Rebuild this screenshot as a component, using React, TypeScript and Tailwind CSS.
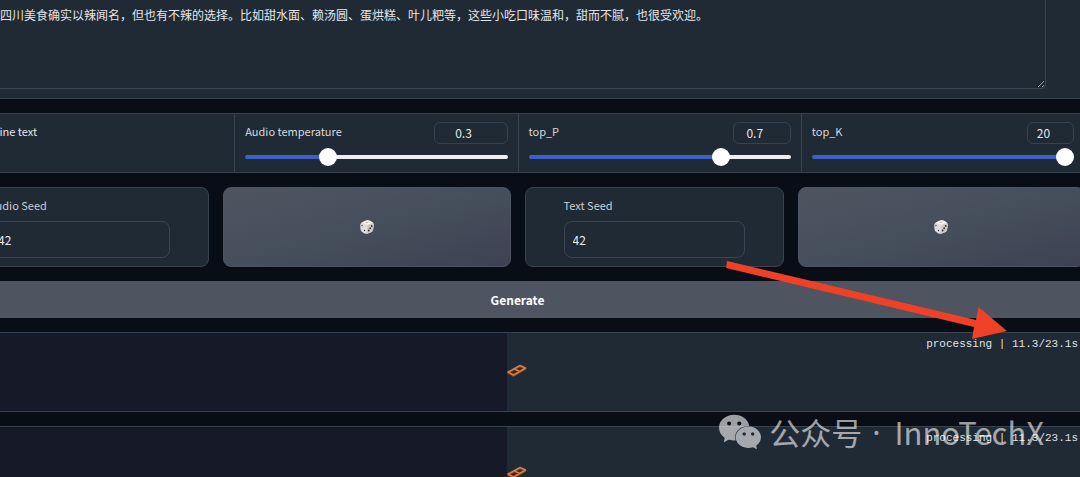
import { useState } from "react";
import { SiWechat } from "react-icons/si";

const PANEL = "border border-[#39424f] bg-[#202a35]";

function SliderCell({
  id,
  label,
  min,
  max,
  step,
  initial,
  boxClass,
}: {
  id: string;
  label: string;
  min: number;
  max: number;
  step: number;
  initial: number;
  boxClass: string;
}) {
  const [value, setValue] = useState(initial);
  const fill = ((value - min) / (max - min)) * 100;
  return (
    <div className="flex min-w-0 flex-col border-l border-[#39424f] px-2.5 pt-2">
      <div className="flex items-start justify-between">
        <label htmlFor={id} className="text-[11px] leading-[18px] text-[#d5d9df]">
          {label}
        </label>
        <input
          type="number"
          aria-label={`${label} value`}
          min={min}
          max={max}
          step={step}
          value={value}
          onChange={(e) => setValue(Number(e.target.value))}
          className={`h-[22px] rounded-md border border-[#374151] bg-transparent pr-3.5 pb-px text-center text-[#e5e7eb] [appearance:textfield] [&::-webkit-inner-spin-button]:appearance-none ${boxClass}`}
        />
      </div>
      <input
        id={id}
        type="range"
        min={min}
        max={max}
        step={step}
        value={value}
        onChange={(e) => setValue(Number(e.target.value))}
        style={{
          backgroundImage: `linear-gradient(to right, #3b5fcb ${fill}%, #eceef2 ${fill}%)`,
        }}
        className="mt-[11px] block h-1 w-full appearance-none rounded-full [&::-webkit-slider-thumb]:size-[18px] [&::-webkit-slider-thumb]:appearance-none [&::-webkit-slider-thumb]:rounded-full [&::-webkit-slider-thumb]:bg-white"
      />
    </div>
  );
}

function SeedCard({ id, label }: { id: string; label: string }) {
  return (
    <div className={`min-w-0 rounded-lg px-[38px] pt-2 ${PANEL}`}>
      <label htmlFor={id} className="block text-[11px] leading-[18px] text-[#c9ced6]">
        {label}
      </label>
      <input
        id={id}
        type="text"
        defaultValue="42"
        className="mt-[7px] block h-[37px] w-full rounded-lg border border-[#3b4552] bg-[#202a35] px-2 pb-px text-[#e8eaee]"
      />
    </div>
  );
}

function Dice() {
  return (
    <svg viewBox="0 0 28 28" className="size-3.5" aria-hidden="true">
      <path d="M9 2.5 Q14 -.5 20 1.5 L25 4.5 Q28 7 27.5 11 L26 20 Q25 23 21 25 L14 27.5 Q11 28 8 26.5 L3 23 Q1 21 .8 17 L.5 10 Q.5 7 3 5.5Z" fill="#dcdcda" />
      <path d="M3 5.5 L9 2.5 Q14 -.5 20 1.5 L26 5.5 L15 10Z" fill="#f0f0ef" />
      <path d="M15 10 L26.5 6 Q28 8 27.5 11 L26 20 Q25 23 21 25 L14 27.5Z" fill="#c9c9c7" />
      <ellipse cx="13.5" cy="4.5" rx="2.4" ry="1.1" fill="#b9a4a6" />
      <g fill="#2c2c2c">
        <ellipse cx="4" cy="11" rx="1.2" ry="1.6" />
        <ellipse cx="9" cy="21" rx="1.2" ry="1.6" />
        <ellipse cx="23.5" cy="12" rx="1.7" ry="1.9" />
        <ellipse cx="20.3" cy="16.5" rx="1.7" ry="1.9" />
        <ellipse cx="17.3" cy="21" rx="1.7" ry="1.9" />
      </g>
    </svg>
  );
}

function DiceButton({ label }: { label: string }) {
  return (
    <button
      type="button"
      aria-label={label}
      className="flex min-w-0 items-center justify-center rounded-lg border border-[#4b5563] bg-linear-to-br from-[#4e5561] via-[#454f5b] to-[#3e4153]"
    >
      <Dice />
    </button>
  );
}

function Loader() {
  return (
    <svg viewBox="0 0 40 26" className="h-[13px] w-5" aria-hidden="true">
      <path d="M2 18 L26 5 L37 10 L13 24Z" fill="#47240f" stroke="#8a451d" strokeWidth="3" strokeLinejoin="round" />
      <path d="M2 16 L26 3 L37 8 L13 22Z M14 9.5 L25 15" fill="none" stroke="#c9824f" strokeWidth="3" strokeLinejoin="round" />
    </svg>
  );
}

function StatusPanel({ heightClass }: { heightClass: string }) {
  const elapsed = 11.34;
  const total = 23.1;
  return (
    <section className={`relative flex shrink-0 items-center justify-center pr-0.5 pb-1 ${heightClass} ${PANEL}`}>
      <div
        className="absolute inset-y-0 left-0 bg-[#161a28]"
        style={{ width: `${(elapsed / total) * 100}%` }}
      />
      <p className="absolute top-1 right-1.5 font-['Liberation_Mono',monospace] text-[11px] leading-[14px] text-[#dfe2e6]">
        processing | {elapsed.toFixed(1)}/{total}s
      </p>
      <div className="relative">
        <Loader />
      </div>
    </section>
  );
}

export default function App() {
  return (
    <div className="relative h-screen overflow-hidden bg-[#090d16] font-['Noto_Sans_CJK_SC',sans-serif] text-xs">
      <main className="-mt-[33px] -mr-[5px] -ml-[50px] flex flex-col gap-3.5">
        <section className={`px-[38px] pt-7 pb-[9px] ${PANEL}`}>
          <textarea
            aria-label="Input text"
            spellCheck={false}
            defaultValue="四川美食确实以辣闻名，但也有不辣的选择。比如甜水面、赖汤圆、蛋烘糕、叶儿粑等，这些小吃口味温和，甜而不腻，也很受欢迎。"
            className="block h-[93px] w-full resize rounded-sm border border-[#3b4552] bg-transparent px-2.5 py-[9px] leading-[18px] text-[#e3e6ea] [color-scheme:dark]"
          />
        </section>

        <section className={`grid h-[60px] shrink-0 grid-cols-4 ${PANEL}`}>
          <label className="flex items-start gap-2 px-2.5 pt-2 text-[11px] leading-[18px] text-[#e3e6ea]">
            <input type="checkbox" defaultChecked className="mt-0.5 size-3.5" />
            Refine text
          </label>
          <SliderCell id="temperature" label="Audio temperature" min={0} max={1} step={0.1} initial={0.3} boxClass="w-[74px]" />
          <SliderCell id="top-p" label="top_P" min={0.1} max={0.9} step={0.05} initial={0.7} boxClass="w-[58px]" />
          <SliderCell id="top-k" label="top_K" min={1} max={20} step={1} initial={20} boxClass="w-[47px]" />
        </section>

        <section className="grid h-20 shrink-0 grid-cols-[259fr_287fr_259fr_287fr] gap-3.5">
          <SeedCard id="audio-seed" label="Audio Seed" />
          <DiceButton label="Random audio seed" />
          <SeedCard id="text-seed" label="Text Seed" />
          <DiceButton label="Random text seed" />
        </section>

        <button type="button" className="h-[37px] shrink-0 bg-[#4e5460] text-xs font-bold text-white">
          Generate
        </button>

        <StatusPanel heightClass="h-20" />
        <StatusPanel heightClass="h-24" />
      </main>

      <svg viewBox="0 0 284 80" className="absolute top-[261px] left-[725px] h-20 w-[284px]" aria-hidden="true">
        <path d="M2 0 L251 59 L253.5 46 L282 70 L247 78 L249 66 L1 7Z" fill="#ee4127" />
      </svg>

      <div className="absolute right-9 bottom-6 flex items-center text-[31px] leading-10 text-white/60">
        <SiWechat className="mr-2 size-[42px]" aria-hidden="true" />
        <span>公众号</span>
        <span className="mr-3.5 ml-2.5 font-['Noto_Sans',sans-serif]">·</span>
        <span>InnoTechX</span>
      </div>
    </div>
  );
}
